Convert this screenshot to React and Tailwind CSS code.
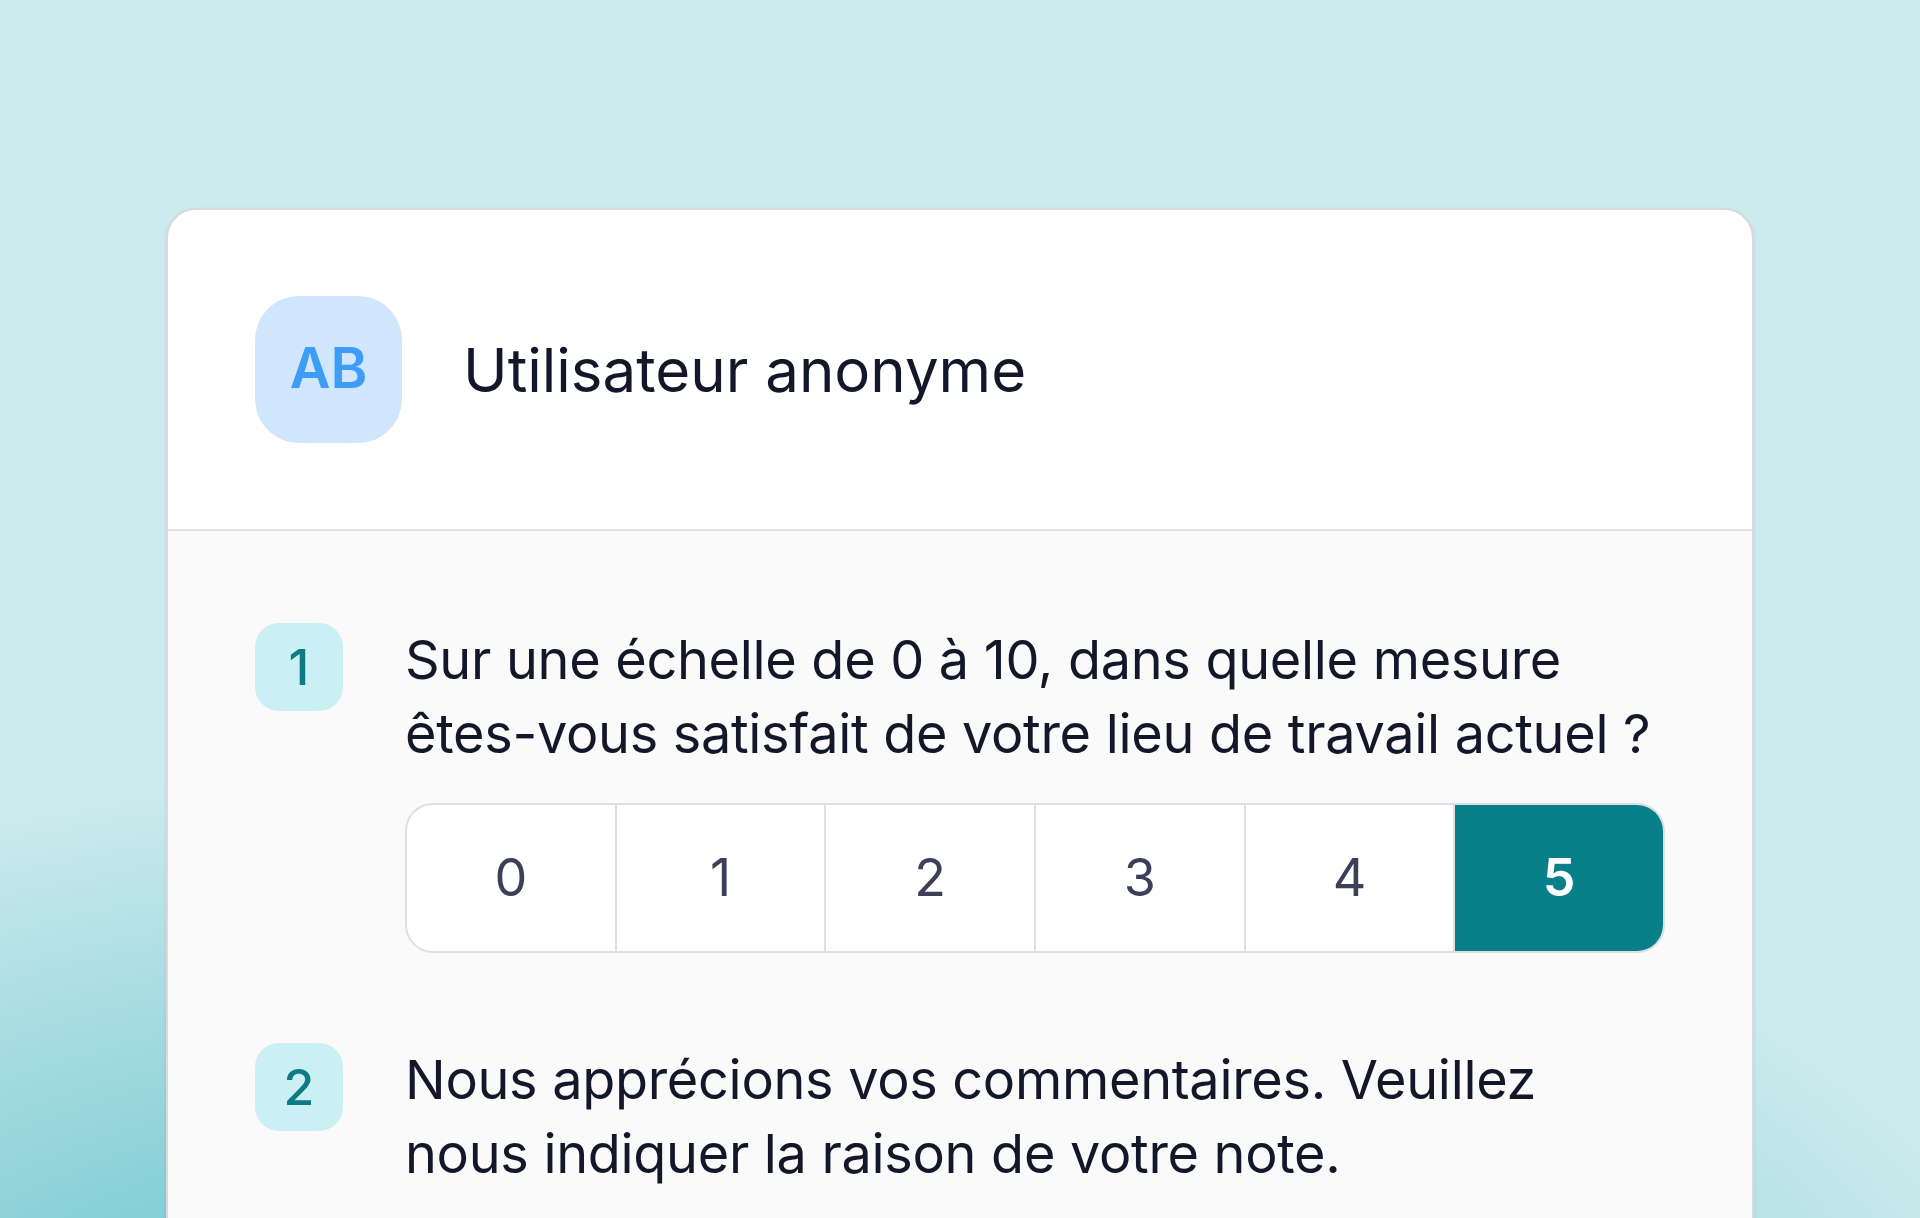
export default function App() {
  const scale = [0, 1, 2, 3, 4, 5];
  const selected = 5;

  return (
    <div
      className="h-[1218px] w-full overflow-hidden bg-[#cdebee] pl-[166px] pt-[208px]"
      style={{
        fontFamily: 'Inter, "Noto Sans", sans-serif',
        backgroundImage:
          'radial-gradient(ellipse 1500px 700px at 600px 1450px, #5cc3cc 0%, #7fcdd4 40%, #cdebee 100%)',
      }}
    >
      <div className="w-[1588px] overflow-hidden rounded-[30px] border-2 border-[#d9d9df] bg-white shadow-sm">
        {/* header */}
        <div className="flex h-[321px] items-center gap-[61px] border-b-2 border-[#e3e3e8] px-[87px]">
          <div className="flex h-[147px] w-[147px] items-center justify-center rounded-[44px] bg-[#cfe6fd] pb-[4px] text-[56px] font-semibold text-[#3d9cf5]">
            AB
          </div>
          <div className="text-[60px] text-[#14172a]">Utilisateur anonyme</div>
        </div>

        {/* questions */}
        <div className="flex flex-col gap-[90px] bg-[#fafafa] px-[87px] pb-[200px] pt-[92px]">
          <div className="flex gap-[62px]">
            <div className="flex h-[88px] w-[88px] shrink-0 items-center justify-center rounded-[24px] bg-[#cbf0f4] text-[50px] font-medium text-[#0e7b84]">
              1
            </div>
            <div className="flex-1">
              <p className="whitespace-nowrap text-[54px] leading-[74px] tracking-[-0.3px] text-[#14172a]">
                Sur une échelle de 0 à 10, dans quelle mesure
                <br />
                êtes-vous satisfait de votre lieu de travail actuel ?
              </p>
              <div className="mt-[32px] flex h-[150px] overflow-hidden rounded-[28px] border-2 border-[#dedee4] bg-white">
                {scale.map((n) => (
                  <div
                    key={n}
                    className={
                      n === selected
                        ? 'flex flex-1 items-center justify-center bg-[#07808a] text-[52px] font-semibold text-white'
                        : 'flex flex-1 items-center justify-center border-r-2 border-[#dedee4] text-[52px] text-[#3c3e5a]'
                    }
                  >
                    {n}
                  </div>
                ))}
              </div>
            </div>
          </div>

          <div className="flex gap-[62px]">
            <div className="flex h-[88px] w-[88px] shrink-0 items-center justify-center rounded-[24px] bg-[#cbf0f4] text-[50px] font-medium text-[#0e7b84]">
              2
            </div>
            <p className="flex-1 whitespace-nowrap text-[54px] leading-[74px] tracking-[-0.3px] text-[#14172a]">
              Nous apprécions vos commentaires. Veuillez
              <br />
              nous indiquer la raison de votre note.
            </p>
          </div>
        </div>
      </div>
    </div>
  );
}
